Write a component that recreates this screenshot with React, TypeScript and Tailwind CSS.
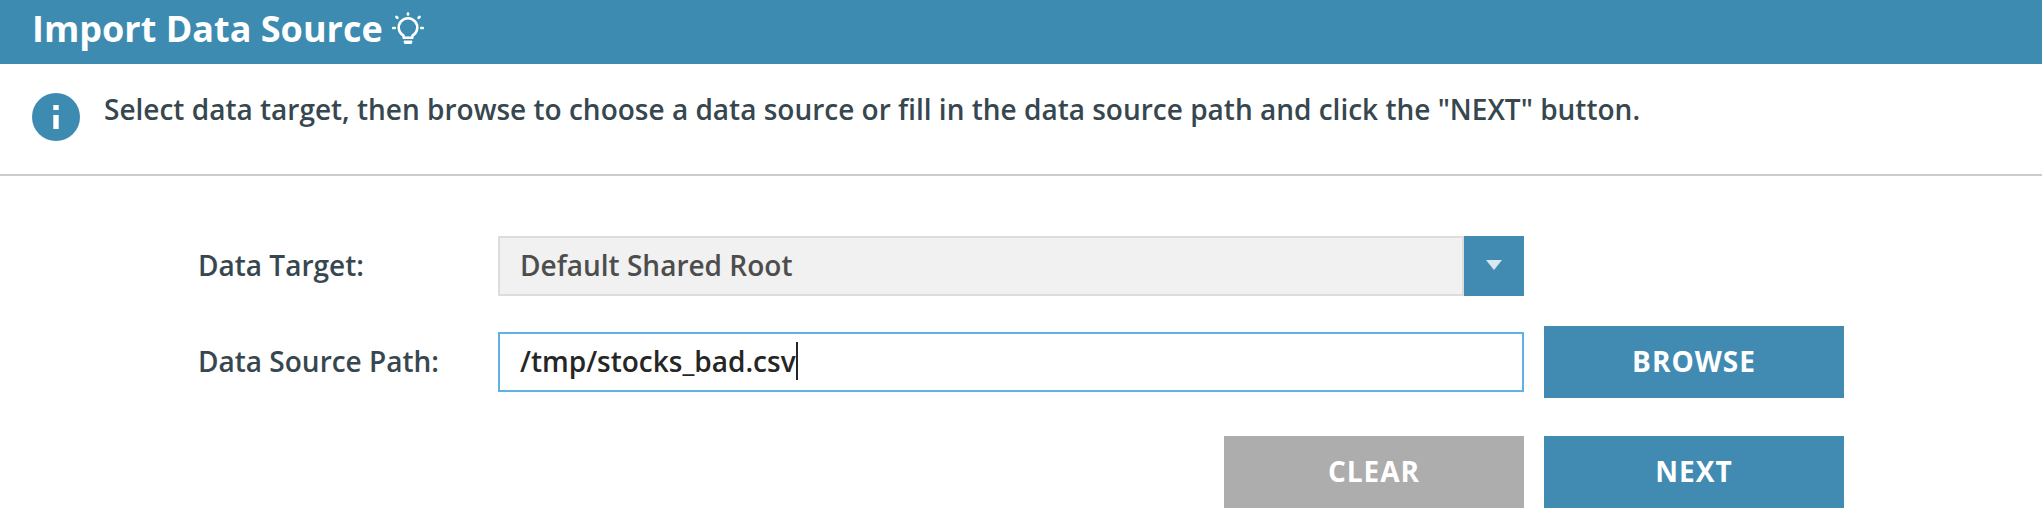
import React from "react";

function BulbIcon() {
  return (
    <svg className="ml-[9px] mt-3 h-8 w-8 shrink-0" viewBox="0 0 32 32" fill="none" stroke="#fff">
      <path d="M11.600 25.800v-2.100a9.300 9.300 0 1 1 8.800 0v2.100z" strokeWidth="2.500" strokeLinejoin="round" />
      <path d="M12 29h8l-.5 2.400h-7z" fill="#fff" strokeWidth="1" strokeLinejoin="round" />
      <path d="M16 1.500v1M1.300 16h1.400M29.300 16h1.400M4.500 4.900l.8 .8M27.500 4.900l-.8 .8" strokeWidth="2.700" strokeLinecap="round" />
    </svg>
  );
}

function InfoIcon() {
  return (
    <svg className="mt-[29px] h-12 w-12 shrink-0" viewBox="0 0 48 48">
      <circle cx="24" cy="24" r="24" fill="#3d8bb1" />
      <path d="M21.300 12h5.400v5h-5.400zM21.300 22h5.400v14h-5.400z" fill="#fff" />
    </svg>
  );
}

function ActionButton({ label, muted = false }: { label: string; muted?: boolean }) {
  return (
    <button
      type="button"
      className={`h-[72px] w-[300px] pb-[2px] text-[28px] leading-[70px] font-bold tracking-[1px] text-white ${muted ? "bg-[#adadad]" : "bg-[#418bb3]"}`}
    >
      {label}
    </button>
  );
}

export default function App() {
  return (
    <div className="h-[532px] w-full overflow-hidden bg-white font-['Open_Sans',sans-serif] text-[28px] font-semibold text-[#37474f]">
      <header className="flex h-16 bg-[#3d8bb1] pl-8">
        <h1 className="text-[36px] leading-[58px] font-bold whitespace-nowrap text-white">Import Data Source</h1>
        <BulbIcon />
      </header>
      <section className="flex h-28 border-b-2 border-[#cccccc] pl-8">
        <InfoIcon />
        <p className="mt-[25px] ml-6 leading-[40px] whitespace-nowrap">
          Select data target, then browse to choose a data source or fill in the data source path and click the "NEXT" button.
        </p>
      </section>
      <form className="pt-[60px] pl-[198px]">
        <div className="flex h-[60px] items-center">
          <label className="w-[300px] pb-[2px] leading-[58px]">Data Target:</label>
          <div className="flex h-[60px] w-[1026px]">
            <div className="flex-1 border-2 border-[#dddddd] bg-[#f1f1f1] pl-5 leading-[54px] text-[#4d4d4d]">Default Shared Root</div>
            <div className="flex w-[60px] justify-center bg-[#418bb3] pt-6">
              <svg className="h-[10px] w-4" viewBox="0 0 16 10">
                <path d="M0 0h16L8 10z" fill="#d9e8f0" />
              </svg>
            </div>
          </div>
        </div>
        <div className="mt-[30px] flex h-[72px] items-center">
          <label className="w-[300px] pb-[2px] leading-[58px]">Data Source Path:</label>
          <div className="mr-5 flex h-[60px] w-[1026px] items-center border-2 border-[#61b1e6] pl-5 text-[#262626]">
            <span className="pb-[2px] leading-[54px]">/tmp/stocks_bad.csv</span>
            <span className="mb-[2px] h-[38px] w-[2px] bg-[#262626]" />
          </div>
          <ActionButton label="BROWSE" />
        </div>
        <div className="mt-[38px] ml-[1026px] flex gap-5">
          <ActionButton label="CLEAR" muted />
          <ActionButton label="NEXT" />
        </div>
      </form>
    </div>
  );
}
